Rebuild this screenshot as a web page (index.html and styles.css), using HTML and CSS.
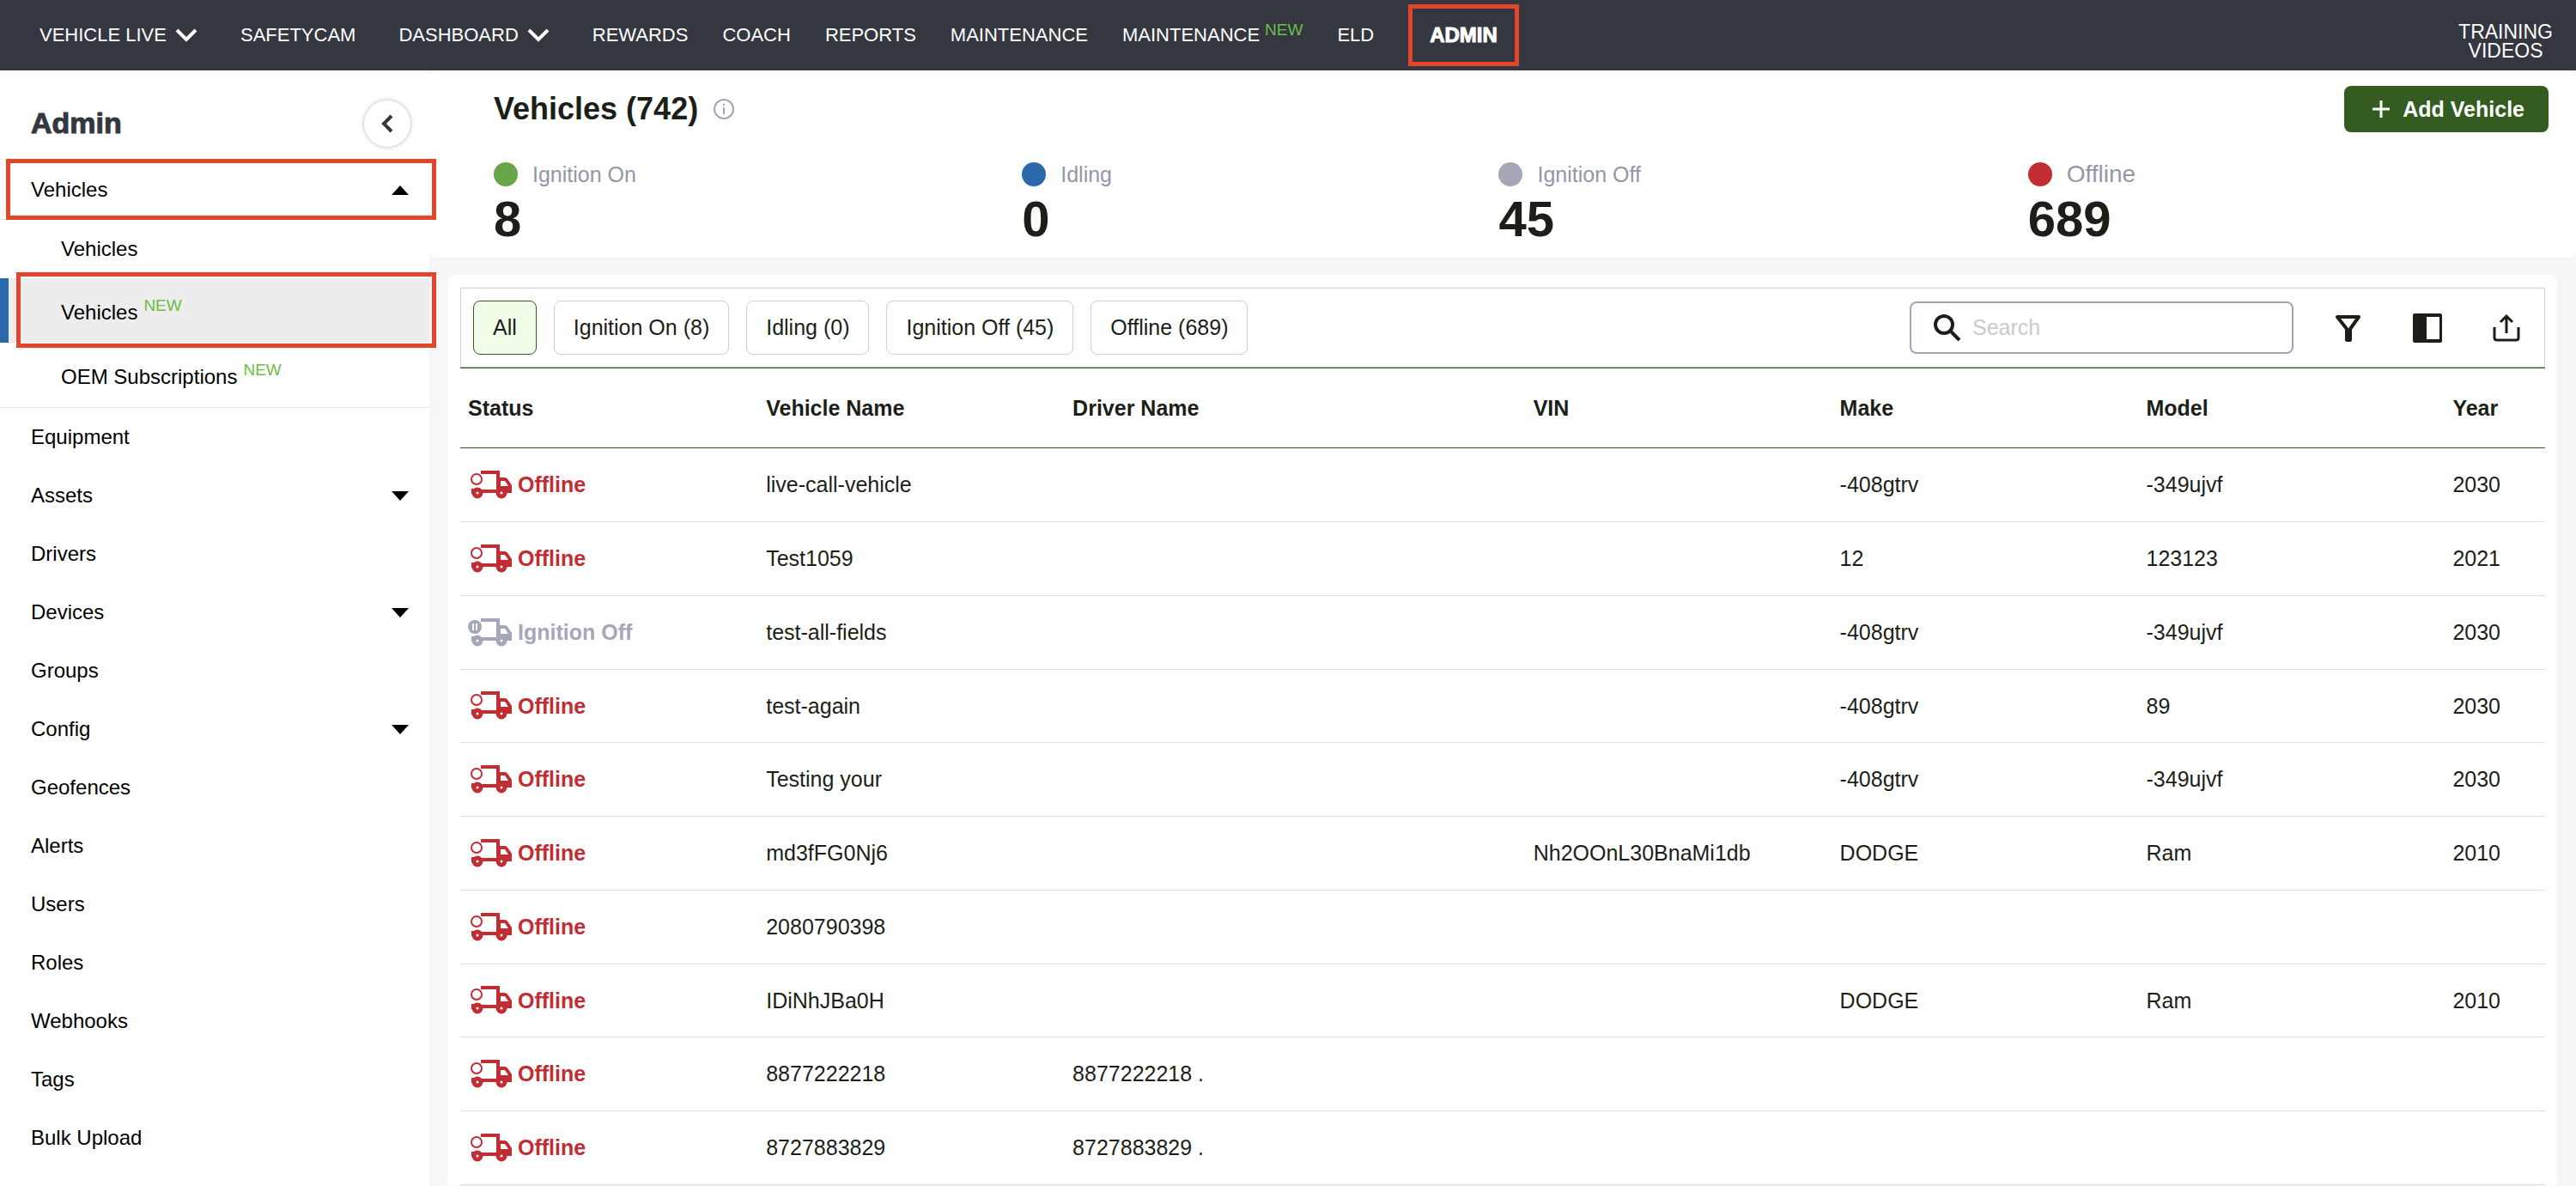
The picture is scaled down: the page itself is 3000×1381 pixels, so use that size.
FILE: index.html
```html
<!DOCTYPE html>
<html lang="en">
<head>
  <meta charset="UTF-8" />
  <meta name="viewport" content="width=device-width, initial-scale=1.0"/>
  <title>Admin - Vehicles</title>
  <link rel="stylesheet" href="styles.css">
</head>
<body>
  <!-- shared icons -->
  <svg class="sprite" aria-hidden="true">
    <symbol id="truck" viewBox="0 0 52 34">
      <path d="M15 2H35V24" fill="none" stroke="currentColor" stroke-width="4"/>
      <path d="M16 24H36" stroke="currentColor" stroke-width="4"/>
      <path fill-rule="evenodd" d="M34 8H43Q45 8 47 11L51 17V26H34ZM38 12V18H47L43 12Z" fill="currentColor"/>
      <path d="M4 21H11V27H4Z" fill="currentColor"/>
      <circle cx="11" cy="26" r="4" fill="#fff" stroke="currentColor" stroke-width="5"/>
      <circle cx="39" cy="26" r="4" fill="#fff" stroke="currentColor" stroke-width="5"/>
    </symbol>
    <symbol id="truck-offline" viewBox="0 0 52 34">
      <use href="#truck"/>
      <circle cx="10" cy="10" r="6" fill="#fff" stroke="currentColor" stroke-width="2"/>
    </symbol>
    <symbol id="truck-paused" viewBox="0 0 52 34">
      <use href="#truck"/>
      <circle cx="8" cy="10" r="8" fill="currentColor"/>
      <path d="M6 6V14M10 6V14" stroke="#fff" stroke-width="2"/>
    </symbol>
    <symbol id="chevron" viewBox="0 0 26 16">
      <path d="M2 2L13 13L24 2" fill="none" stroke="currentColor" stroke-width="4"/>
    </symbol>
  </svg>

  <header class="topbar">
    <nav class="topnav">
      <button class="dropdown" type="button">VEHICLE LIVE <svg class="chevron"><use href="#chevron"/></svg></button>
      <a href="#">SAFETYCAM</a>
      <button class="dropdown" type="button">DASHBOARD <svg class="chevron"><use href="#chevron"/></svg></button>
      <a href="#">REWARDS</a>
      <a href="#">COACH</a>
      <a href="#">REPORTS</a>
      <a href="#">MAINTENANCE</a>
      <a href="#">MAINTENANCE <span class="new">NEW</span></a>
      <a href="#">ELD</a>
      <a href="#" class="current">ADMIN</a>
    </nav>
    <a href="#" class="training">TRAINING<br>VIDEOS</a>
  </header>

  <div class="layout">
    <aside class="sidebar">
      <div class="sidebar-head">
        <h2>Admin</h2>
        <button class="collapse" type="button" aria-label="Collapse menu">
          <svg width="14" height="22" viewBox="0 0 14 22"><path d="M12 2L3 11L12 20" fill="none" stroke="currentColor" stroke-width="4"/></svg>
        </button>
      </div>
      <nav class="menu">
        <a href="#" class="item marked">Vehicles <span class="arrow up"></span></a>
        <div class="submenu">
          <a href="#" class="item sub">Vehicles</a>
          <a href="#" class="item sub tall active marked">Vehicles <span class="new">NEW</span></a>
          <a href="#" class="item sub tall">OEM Subscriptions <span class="new">NEW</span></a>
        </div>
        <a href="#" class="item">Equipment</a>
        <a href="#" class="item">Assets <span class="arrow"></span></a>
        <a href="#" class="item">Drivers</a>
        <a href="#" class="item">Devices <span class="arrow"></span></a>
        <a href="#" class="item">Groups</a>
        <a href="#" class="item">Config <span class="arrow"></span></a>
        <a href="#" class="item">Geofences</a>
        <a href="#" class="item">Alerts</a>
        <a href="#" class="item">Users</a>
        <a href="#" class="item">Roles</a>
        <a href="#" class="item">Webhooks</a>
        <a href="#" class="item">Tags</a>
        <a href="#" class="item">Bulk Upload</a>
      </nav>
    </aside>

    <main class="content">
      <section class="summary">
        <div class="title-row">
          <h1>Vehicles (742)</h1>
          <svg class="info" viewBox="0 0 24 24">
            <circle cx="12" cy="12" r="11" fill="none" stroke="currentColor" stroke-width="2"/>
            <path d="M12 6V8M12 10V18" stroke="currentColor" stroke-width="2"/>
          </svg>
          <button class="add" type="button">
            <svg width="22" height="22" viewBox="0 0 22 22"><path d="M11 1V21M1 11H21" stroke="currentColor" stroke-width="3"/></svg>
            Add Vehicle
          </button>
        </div>
        <div class="stats">
          <div class="stat">
            <div class="stat-label"><span class="dot on"></span>Ignition On</div>
            <div class="stat-value">8</div>
          </div>
          <div class="stat">
            <div class="stat-label"><span class="dot idle"></span>Idling</div>
            <div class="stat-value">0</div>
          </div>
          <div class="stat">
            <div class="stat-label"><span class="dot off"></span>Ignition Off</div>
            <div class="stat-value">45</div>
          </div>
          <div class="stat">
            <div class="stat-label large"><span class="dot offline"></span>Offline</div>
            <div class="stat-value">689</div>
          </div>
        </div>
      </section>

      <section class="card">
        <div class="toolbar">
          <div class="filters">
            <button class="pill selected" type="button">All</button>
            <button class="pill" type="button">Ignition On (8)</button>
            <button class="pill" type="button">Idling (0)</button>
            <button class="pill" type="button">Ignition Off (45)</button>
            <button class="pill" type="button">Offline (689)</button>
          </div>
          <label class="search">
            <svg width="32" height="32" viewBox="0 0 32 32">
              <circle cx="12" cy="12" r="10" fill="none" stroke="currentColor" stroke-width="4"/>
              <path d="M19 19L30 30" stroke="currentColor" stroke-width="4"/>
            </svg>
            <input type="search" placeholder="Search" aria-label="Search">
          </label>
          <div class="tools">
            <button class="tool" type="button" aria-label="Filter">
              <svg width="34" height="34" viewBox="0 0 34 34"><path d="M4 4H29L19 18V31H15V18Z" fill="none" stroke="currentColor" stroke-width="4" stroke-linejoin="round"/></svg>
            </button>
            <button class="tool" type="button" aria-label="Columns">
              <svg width="34" height="34" viewBox="0 0 34 34"><path fill-rule="evenodd" d="M2 0H32Q34 0 34 2V32Q34 34 32 34H2Q0 34 0 32V2Q0 0 2 0ZM16 4V30H31V4Z" fill="currentColor"/></svg>
            </button>
            <button class="tool" type="button" aria-label="Export">
              <svg width="34" height="34" viewBox="0 0 34 34"><path d="M3 16V28Q3 31 6 31H28Q31 31 31 28V16M17 23V4M10 10L17 3L24 10" fill="none" stroke="currentColor" stroke-width="3"/></svg>
            </button>
          </div>
        </div>

        <table class="vehicles">
          <thead>
            <tr>
              <th class="col-status">Status</th>
              <th class="col-mid">Vehicle Name</th>
              <th class="col-wide">Driver Name</th>
              <th class="col-mid">VIN</th>
              <th class="col-mid">Make</th>
              <th class="col-mid">Model</th>
              <th>Year</th>
            </tr>
          </thead>
          <tbody>
            <tr>
              <td><span class="status offline"><svg><use href="#truck-offline"/></svg>Offline</span></td>
              <td>live-call-vehicle</td><td></td><td></td><td>-408gtrv</td><td>-349ujvf</td><td>2030</td>
            </tr>
            <tr>
              <td><span class="status offline"><svg><use href="#truck-offline"/></svg>Offline</span></td>
              <td>Test1059</td><td></td><td></td><td>12</td><td>123123</td><td>2021</td>
            </tr>
            <tr>
              <td><span class="status off"><svg><use href="#truck-paused"/></svg>Ignition Off</span></td>
              <td>test-all-fields</td><td></td><td></td><td>-408gtrv</td><td>-349ujvf</td><td>2030</td>
            </tr>
            <tr>
              <td><span class="status offline"><svg><use href="#truck-offline"/></svg>Offline</span></td>
              <td>test-again</td><td></td><td></td><td>-408gtrv</td><td>89</td><td>2030</td>
            </tr>
            <tr>
              <td><span class="status offline"><svg><use href="#truck-offline"/></svg>Offline</span></td>
              <td>Testing your</td><td></td><td></td><td>-408gtrv</td><td>-349ujvf</td><td>2030</td>
            </tr>
            <tr>
              <td><span class="status offline"><svg><use href="#truck-offline"/></svg>Offline</span></td>
              <td>md3fFG0Nj6</td><td></td><td>Nh2OOnL30BnaMi1db</td><td>DODGE</td><td>Ram</td><td>2010</td>
            </tr>
            <tr>
              <td><span class="status offline"><svg><use href="#truck-offline"/></svg>Offline</span></td>
              <td>2080790398</td><td></td><td></td><td></td><td></td><td></td>
            </tr>
            <tr>
              <td><span class="status offline"><svg><use href="#truck-offline"/></svg>Offline</span></td>
              <td>IDiNhJBa0H</td><td></td><td></td><td>DODGE</td><td>Ram</td><td>2010</td>
            </tr>
            <tr>
              <td><span class="status offline"><svg><use href="#truck-offline"/></svg>Offline</span></td>
              <td>8877222218</td><td>8877222218 .</td><td></td><td></td><td></td><td></td>
            </tr>
            <tr>
              <td><span class="status offline"><svg><use href="#truck-offline"/></svg>Offline</span></td>
              <td>8727883829</td><td>8727883829 .</td><td></td><td></td><td></td><td></td>
            </tr>
          </tbody>
        </table>
      </section>
    </main>
  </div>
</body>
</html>
```
FILE: styles.css
```css
* {
  box-sizing: border-box;
}
body {
  margin: 0;
  font-family: "Liberation Sans", Arial, sans-serif;
  font-size: 25px;
  color: #1b1f18;
  background-color: #f6f6f6;
}
a {
  color: inherit;
  text-decoration: none;
}
button, input {
  font: inherit;
  color: inherit;
}
h1, h2 {
  margin: 0;
}
.sprite {
  position: absolute;
  width: 0;
  height: 0;
}
.new {
  font-size: 19px;
  line-height: 20px;
  color: #6cbe45;
  padding-bottom: 16px;
}

/* top bar */
.topbar {
  display: flex;
  justify-content: space-between;
  align-items: center;
  height: 82px;
  padding: 0 27px 0 36px;
  font-size: 22px;
  color: #fff;
  background-color: #343640;
}
.topnav {
  display: flex;
  align-items: center;
  gap: 40px;
  height: 100%;
  white-space: nowrap;
}
.topnav a {
  display: flex;
  align-items: center;
  gap: 6px;
}
.topnav .new {
  padding-bottom: 12px;
}
.dropdown {
  display: flex;
  align-items: center;
  gap: 10px;
  padding: 0 10px;
  border: 0;
  background: none;
}
.chevron {
  width: 26px;
  height: 16px;
}
.topnav .current {
  height: 72px;
  padding: 0 20px;
  border: 5px solid #e2452a;
  font-size: 24px;
  font-weight: bold;
  -webkit-text-stroke: 1px;
}
.training {
  padding-top: 14px;
  font-size: 23px;
  line-height: 22px;
  text-align: center;
}

.layout {
  display: flex;
  min-height: calc(100vh - 82px);
}

/* sidebar */
.sidebar {
  flex: 0 0 500px;
  background-color: #fff;
}
.sidebar-head {
  display: flex;
  justify-content: space-between;
  align-items: center;
  height: 105px;
  padding: 18px 22px 0 36px;
}
.sidebar-head h2 {
  font-size: 34px;
  color: #343640;
  -webkit-text-stroke: 1px;
}
.collapse {
  display: flex;
  align-items: center;
  justify-content: center;
  width: 54px;
  height: 54px;
  padding: 0;
  border: 0;
  border-radius: 50%;
  color: #343640;
  background-color: #fff;
  box-shadow: 0 0 5px rgba(0, 0, 0, 0.3);
}
.item {
  display: flex;
  align-items: center;
  position: relative;
  height: 68px;
  padding: 0 24px 0 36px;
  gap: 7px;
  font-size: 24px;
  color: #000;
}
.submenu {
  border-top: 1px solid #e8e8e8;
  border-bottom: 1px solid #e8e8e8;
}
.item.sub {
  padding-left: 71px;
}
.item.tall {
  height: 75px;
  padding-top: 4px;
}
.item.active {
  background-color: #ededed;
  border-left: 10px solid #2c69ab;
  padding-left: 61px;
}
/* red highlight lies over the neighbouring rows */
.item.marked::after {
  content: "";
  position: absolute;
  inset: -2px -8px -1px 7px;
  border: 5px solid #e2452a;
  z-index: 1;
}
.item.active.marked::after {
  inset: -7px -8px -6px 9px;
}
.arrow {
  margin-left: auto;
  border: 10px solid transparent;
  border-top: 11px solid #000;
  border-bottom: 0;
}
.arrow.up {
  border-top: 0;
  border-bottom: 11px solid #000;
}

/* page title and totals */
.content {
  flex: 1;
  min-width: 0;
}
.summary {
  height: 218px;
  padding: 18px 32px 0 75px;
  border-radius: 8px;
  background-color: #fff;
}
.title-row {
  display: flex;
  align-items: center;
}
.title-row h1 {
  font-size: 36px;
  line-height: 40px;
}
.info {
  width: 24px;
  height: 24px;
  margin-left: 18px;
  color: #a0a6b5;
}
.add {
  display: flex;
  align-items: center;
  gap: 14px;
  height: 54px;
  margin-left: auto;
  padding: 0 28px 0 32px;
  border: 0;
  border-radius: 8px;
  font-weight: bold;
  color: #fff;
  background-color: #355c20;
}
.stats {
  display: grid;
  grid-template-columns: 615fr 555fr 616fr 606fr;
  margin-top: 34px;
}
.stat-label {
  display: flex;
  align-items: center;
  gap: 17px;
  height: 30px;
  color: #9297a8;
}
.stat-label.large {
  font-size: 28px;
}
.dot {
  width: 28px;
  height: 28px;
  border-radius: 50%;
}
.dot.on {
  background-color: #67a548;
}
.dot.idle {
  background-color: #2c69ab;
}
.dot.off {
  background-color: #a4a7b8;
}
.dot.offline {
  background-color: #c22d34;
}
.stat-value {
  margin-top: 5px;
  font-size: 58px;
  line-height: 64px;
  font-weight: bold;
}

/* vehicle list */
.card {
  margin: 20px 22px 0 21px;
  padding: 15px 14px 0 15px;
  border-radius: 8px 8px 0 0;
  background-color: #fff;
}
.toolbar {
  display: flex;
  align-items: center;
  height: 93px;
  padding: 0 27px 0 14px;
  border: 1px solid #cfcfcf;
  border-bottom-color: #a9b5a2;
}
.filters {
  display: flex;
  gap: 20px;
}
.pill {
  height: 63px;
  padding: 0 22px;
  border: 1px solid #cfcfcf;
  border-radius: 8px;
  white-space: nowrap;
  background-color: #fff;
}
.pill.selected {
  border-color: #355c20;
  background-color: #f1fde9;
}
.search {
  display: flex;
  align-items: center;
  gap: 13px;
  width: 447px;
  height: 61px;
  margin-left: auto;
  padding: 0 26px;
  border: 2px solid #a0a6b5;
  border-radius: 8px;
}
.search svg {
  flex: none;
}
.search input {
  flex: 1;
  min-width: 0;
  padding: 0;
  border: 0;
  outline: 0;
  background: none;
}
.search input::placeholder {
  color: #cbcbcb;
}
.tools {
  display: flex;
  gap: 58px;
  margin-left: 47px;
}
.tool {
  display: flex;
  padding: 0;
  border: 0;
  background: none;
}
.vehicles {
  width: 100%;
  table-layout: fixed;
  border-collapse: separate;
  border-spacing: 0;
  border-top: 1px solid #355c20;
}
.col-status {
  width: 14.3%;
}
.col-mid {
  width: 14.7%;
}
.col-wide {
  width: 22.1%;
}
th, td {
  height: 86px;
  padding: 0 0 0 9px;
  border-bottom: 1px solid #dedede;
  text-align: left;
  white-space: nowrap;
}
th {
  height: 93px;
  border-bottom-color: #355c20;
}
tr:nth-child(4n) td {
  height: 85px;
}
.status {
  display: flex;
  align-items: center;
  gap: 6px;
  font-weight: bold;
}
.status svg {
  width: 52px;
  height: 34px;
}
.status.offline {
  color: #c22d34;
}
.status.off {
  color: #a4a7b8;
}
```
